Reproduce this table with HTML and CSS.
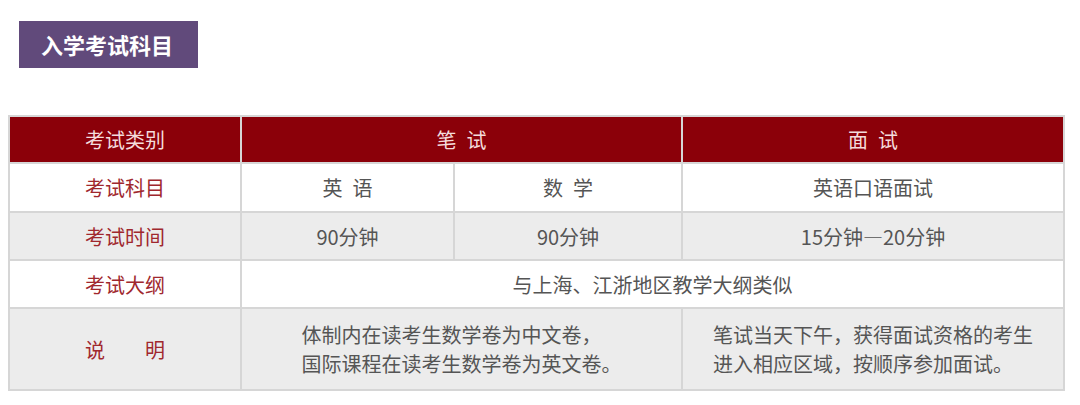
FILE: index.html
```html
<!DOCTYPE html>
<html lang="zh-CN">
<head>
<meta charset="utf-8">
<title>入学考试科目</title>
<link rel="stylesheet" href="styles.css">
</head>
<body>
<div class="page">
  <div class="title">入学考试科目</div>
  <div class="grid">
    <div class="cell head">考试类别</div>
    <div class="cell head span2">笔&ensp;试</div>
    <div class="cell head">面&ensp;试</div>

    <div class="cell label">考试科目</div>
    <div class="cell">英&ensp;语</div>
    <div class="cell">数&ensp;学</div>
    <div class="cell">英语口语面试</div>

    <div class="cell label alt">考试时间</div>
    <div class="cell alt">90分钟</div>
    <div class="cell alt">90分钟</div>
    <div class="cell alt">15分钟—20分钟</div>

    <div class="cell label">考试大纲</div>
    <div class="cell span3">与上海、江浙地区教学大纲类似</div>

    <div class="cell label alt">说&emsp;&emsp;明</div>
    <div class="cell alt span2 note"><div class="lines">体制内在读考生数学卷为中文卷，<br>国际课程在读考生数学卷为英文卷。</div></div>
    <div class="cell alt note"><div class="lines">笔试当天下午，获得面试资格的考生<br>进入相应区域，按顺序参加面试。</div></div>
  </div>
</div>
</body>
</html>
```

FILE: styles.css
```css
html, body {
  margin: 0;
  padding: 0;
  background: #ffffff;
}

body {
  font-family: "Noto Sans CJK SC", "Noto Sans", sans-serif;
  width: 1080px;
  height: 405px;
  overflow: hidden;
}

.page {
  padding-top: 21px;
}

.title {
  margin-left: 19px;
  width: 179px;
  height: 47px;
  background: #614a7b;
  color: #ffffff;
  font-size: 22px;
  font-weight: 700;
  line-height: 47px;
  box-sizing: border-box;
  padding-left: 22px;
}

.grid {
  margin-top: 47px;
  margin-left: 8px;
  width: 1057px;
  box-sizing: border-box;
  display: grid;
  grid-template-columns: 230px 211px 226px 380px;
  grid-template-rows: 45px 47px 46px 46px 80px;
  gap: 2px;
  padding: 2px;
  background: #d6d6d6;
}

.cell {
  background: #ffffff;
  color: #555555;
  font-size: 20px;
  display: flex;
  align-items: center;
  justify-content: center;
  white-space: nowrap;
}

.cell.alt {
  background: #ececec;
}

.cell.head {
  background: #8b0009;
  color: #f4dcdc;
}

.cell.label {
  color: #a0282e;
}

.span2 {
  grid-column: span 2;
}

.span3 {
  grid-column: span 3;
}

.lines {
  text-align: left;
  line-height: 29px;
}
```
